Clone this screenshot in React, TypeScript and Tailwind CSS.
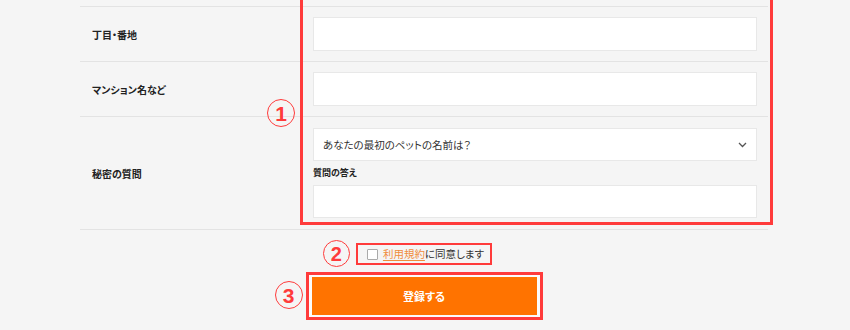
import React from "react";

const jp = "font-['Noto_Sans_CJK_JP',sans-serif] [font-feature-settings:'palt']";

function Circle({ n, className }: { n: string; className: string }) {
  return (
    <div
      className={`absolute rounded-full border-[1.5px] border-[#ff3b3b] flex items-center justify-center text-[#ff3b3b] font-bold font-['Liberation_Sans',sans-serif] leading-none ${className}`}
    >
      {n}
    </div>
  );
}

export default function App() {
  return (
    <div className={`relative w-[850px] h-[330px] overflow-hidden bg-[#f5f5f5] text-[#222] ${jp}`}>
      <div className="ml-[80px] w-[688px]">
        <div className="h-[6px]" />
        <div className="flex border-t border-[#e3e3e3] py-[10px]">
          <div className="w-[233px] pl-3 flex items-center text-[10px] font-bold">丁目・番地</div>
          <div className="flex-1 pr-[11px]">
            <div className="h-[34px] bg-white border border-[#e8e8e8]" />
          </div>
        </div>
        <div className="flex border-t border-[#e3e3e3] py-[10px]">
          <div className="w-[233px] pl-3 flex items-center text-[10px] font-bold">マンション名など</div>
          <div className="flex-1 pr-[11px]">
            <div className="h-[34px] bg-white border border-[#e8e8e8]" />
          </div>
        </div>
        <div className="flex border-t border-[#e3e3e3] pt-[11px] pb-[11px]">
          <div className="w-[233px] pl-3 flex items-center text-[10px] font-bold">秘密の質問</div>
          <div className="flex-1 pr-[11px]">
            <div className="h-[33px] bg-white border border-[#e8e8e8] flex items-center justify-between pl-[9px] pr-[9px]">
              <span className="text-[10.5px] text-[#333]">あなたの最初のペットの名前は？</span>
              <svg width="9" height="6" viewBox="0 0 9 6" fill="none">
                <path d="M1 1l3.5 3.5L8 1" stroke="#555" strokeWidth="1.3" />
              </svg>
            </div>
            <div className="h-[24px] flex items-center text-[9px] font-bold">質問の答え</div>
            <div className="h-[33px] bg-white border border-[#e8e8e8]" />
          </div>
        </div>
        <div className="border-t border-[#e3e3e3] pt-[13px] flex flex-col items-center">
          <div className="relative">
            <Circle n="2" className="left-[-33px] top-[-3px] w-[27px] h-[27px] text-[20px]" />
            <div className="h-[22px] border-2 border-[#ff3b3b] flex items-center pl-[9px] pr-[6px] gap-[5px] text-[10.5px] text-[#333]">
              <span className="w-[11px] h-[11px] border border-[#aaa] bg-white rounded-[1px]" />
              <span>
                <span className="text-[#f08c3c] underline underline-offset-2">利用規約</span>に同意します
              </span>
            </div>
          </div>
          <div className="relative mt-[7px]">
            <Circle n="3" className="left-[-31px] top-[9px] w-[28px] h-[28px] text-[21px]" />
            <div className="border-[3px] border-[#ff3b3b] px-[3px] py-[2px] bg-[#fbfbfb]">
              <div className="w-[225px] h-[38px] bg-[#ff7300] flex items-center justify-center text-white text-[11px] font-bold">
                登録する
              </div>
            </div>
          </div>
        </div>
      </div>
      <div className="absolute left-[300px] top-[-5px] w-[473px] h-[230px] border-[3px] border-[#ff3b3b]" />
      <Circle n="1" className="left-[267px] top-[99px] w-[28px] h-[28px] text-[21px]" />
    </div>
  );
}
